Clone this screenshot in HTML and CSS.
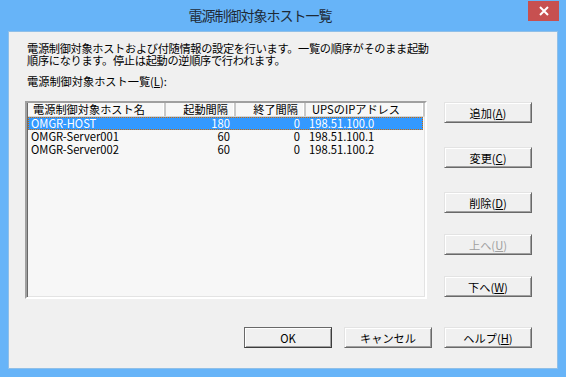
FILE: index.html
```html
<!DOCTYPE html>
<html lang="ja">
<head>
    <meta charset="UTF-8">
    <title>電源制御対象ホスト一覧</title>
    <link rel="stylesheet" href="styles.css">
</head>
<body>

<div class="window">
    <!-- タイトルバー -->
    <div class="titlebar">
        <span class="title">電源制御対象ホスト一覧</span>
        <div class="close">
            <svg width="10" height="10" viewBox="0 0 10 10">
                <path d="M1 1 L9 9 M9 1 L1 9" stroke="#fff" stroke-width="2"/>
            </svg>
        </div>
    </div>

    <!-- クライアント領域 -->
    <div class="client">
        <p class="desc">電源制御対象ホストおよび付随情報の設定を行います。一覧の順序がそのまま起動<br>順序になります。停止は起動の逆順序で行われます。</p>
        <p class="label">電源制御対象ホスト一覧(<u>L</u>):</p>

        <div class="main">
            <div class="listview">
                <div class="row head">
                    <div class="cell">電源制御対象ホスト名</div>
                    <div class="cell num">起動間隔</div>
                    <div class="cell num">終了間隔</div>
                    <div class="cell">UPSのIPアドレス</div>
                </div>
                <div class="row selected">
                    <div class="cell">OMGR-HOST</div>
                    <div class="cell num">180</div>
                    <div class="cell num">0</div>
                    <div class="cell">198.51.100.0</div>
                </div>
                <div class="row">
                    <div class="cell">OMGR-Server001</div>
                    <div class="cell num">60</div>
                    <div class="cell num">0</div>
                    <div class="cell">198.51.100.1</div>
                </div>
                <div class="row">
                    <div class="cell">OMGR-Server002</div>
                    <div class="cell num">60</div>
                    <div class="cell num">0</div>
                    <div class="cell">198.51.100.2</div>
                </div>
            </div>

            <div class="side">
                <button class="btn">追加(<u>A</u>)</button>
                <button class="btn">変更(<u>C</u>)</button>
                <button class="btn">削除(<u>D</u>)</button>
                <button class="btn" disabled>上へ(<u>U</u>)</button>
                <button class="btn">下へ(<u>W</u>)</button>
            </div>
        </div>

        <div class="footer">
            <button class="btn default">OK</button>
            <button class="btn">キャンセル</button>
            <button class="btn">ヘルプ(<u>H</u>)</button>
        </div>
    </div>
</div>

</body>
</html>
```

FILE: styles.css
```css
html, body {
    margin: 0;
    padding: 0;
}
body {
    font-family: "Noto Sans CJK JP", "Noto Sans", sans-serif;
    font-size: 12px;
    color: #000;
}
.window {
    width: 566px;
    height: 377px;
    box-sizing: border-box;
    background-color: #67b4f8;
    padding: 0 8px 8px 8px;
    display: flex;
    flex-direction: column;
}
.titlebar {
    height: 31px;
    position: relative;
    display: flex;
    justify-content: center;
    align-items: center;
    padding-right: 46px;
}
.title {
    font-size: 14px;
    letter-spacing: -1px;
    color: #1e2a36;
    margin-top: -1px;
}
.close {
    position: absolute;
    top: 1px;
    right: -1px;
    width: 31px;
    height: 20px;
    background-color: #c75050;
    display: flex;
    justify-content: center;
    align-items: center;
}
.client {
    flex: 1;
    background-color: #f0f0f0;
    border: 1px solid #8fbfe8;
    padding: 0 25px 0 16px;
    display: flex;
    flex-direction: column;
}
.desc {
    margin: 10px 0 0 2px;
    font-size: 11.2px;
    line-height: 12px;
    letter-spacing: -0.3px;
}
.label {
    margin: 9px 0 0 2px;
    font-size: 11.2px;
    line-height: 13px;
}
.main {
    display: flex;
    margin-top: 13px;
}
.listview {
    width: 402px;
    height: 198px;
    box-sizing: border-box;
    background-color: #f7f7f7;
    border-style: solid;
    border-width: 2px;
    border-color: #a0a0a0 #ffffff #ffffff #a0a0a0;
    box-shadow: inset 1px 1px 0 #696969, inset -1px -1px 0 #e3e3e3;
    font-size: 11.2px;
}
.row {
    display: grid;
    grid-template-columns: 138px 70px 70px 119px;
    height: 13px;
    line-height: 13px;
    margin-left: 1px;
}
.row .cell {
    padding: 0 6px 0 3px;
    white-space: nowrap;
}
.row .num {
    text-align: right;
}
.head {
    height: 13px;
    line-height: 13px;
    background-color: #f7f7f7;
    border-bottom: 1px solid #d5d5d5;
}
.head .cell {
    border-right: 2px solid #c8c8c8;
    box-shadow: inset -1px 0 0 #ffffff;
    padding-left: 6px;
}
.head .cell:first-child {
    padding-left: 5px;
}
.selected {
    background-color: #3399ff;
    color: #fff;
    outline: 1px dotted #d06a00;
    outline-offset: -1px;
    margin-right: 2px;
}
.side {
    display: flex;
    flex-direction: column;
    margin: 1px 0 0 17px;
    gap: 24px;
}
.side .btn:nth-child(n+4) {
    margin-top: -3px;
}
.btn {
    width: 88px;
    height: 21px;
    padding: 0;
    font-family: inherit;
    font-size: 11.2px;
    color: #000;
    background-color: #f0f0f0;
    border-style: solid;
    border-width: 1px;
    border-color: #e3e3e3 #696969 #696969 #e3e3e3;
    box-shadow: inset 1px 1px 0 #ffffff, inset -1px -1px 0 #a0a0a0;
}
.btn:disabled {
    color: #a0a0a0;
}
.btn.default {
    border-color: #696969 #3c3c3c #3c3c3c #696969;
}
.footer {
    display: flex;
    justify-content: flex-end;
    gap: 12px;
    margin-top: 28px;
}
```
